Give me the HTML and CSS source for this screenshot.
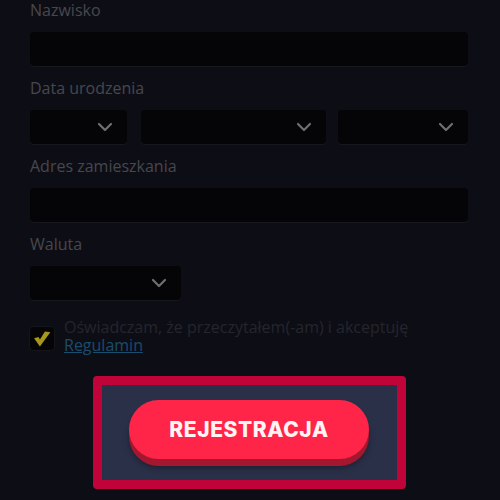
FILE: index.html
```html
<!DOCTYPE html>
<html lang="pl">
<head>
<meta charset="utf-8">
<link rel="stylesheet" href="styles.css">
</head>
<body>
<form class="form">
  <div class="field">
    <label class="label">Nazwisko</label>
    <div class="input"></div>
  </div>
  <div class="field">
    <label class="label">Data urodzenia</label>
    <div class="row">
      <div class="input select s-day"><svg class="chev" viewBox="0 0 16 10"><polyline points="2,2 8,8 14,2"/></svg></div>
      <div class="input select s-month"><svg class="chev" viewBox="0 0 16 10"><polyline points="2,2 8,8 14,2"/></svg></div>
      <div class="input select s-year"><svg class="chev" viewBox="0 0 16 10"><polyline points="2,2 8,8 14,2"/></svg></div>
    </div>
  </div>
  <div class="field">
    <label class="label">Adres zamieszkania</label>
    <div class="input"></div>
  </div>
  <div class="field">
    <label class="label">Waluta</label>
    <div class="input select s-cur"><svg class="chev" viewBox="0 0 16 10"><polyline points="2,2 8,8 14,2"/></svg></div>
  </div>
  <div class="terms">
    <div class="checkbox"><svg viewBox="0 0 24 24"><path d="M2.5 11 L9.5 21 L22 4 L15.5 3 L9.5 12.5 L7.8 9.5 Z"/></svg></div>
    <p class="terms-text"><span class="line">Oświadczam, że przeczytałem(-am) i akceptuję</span><a class="link">Regulamin</a></p>
  </div>
  <div class="spot">
    <div class="spot-inner">
      <button type="button" class="btn">REJESTRACJA</button>
    </div>
  </div>
</form>
</body>
</html>
```
FILE: styles.css
```css
html, body {
  margin: 0;
  padding: 0;
  background: #0d0e15;
  height: 100%;
  overflow: hidden;
}
.form {
  width: 438px;
  margin: 0 0 0 30px;
  font-family: "Open Sans", "Liberation Sans", sans-serif;
  display: flex;
  flex-direction: column;
}
.field {
  display: flex;
  flex-direction: column;
  margin-bottom: 12px;
}
.label {
  font-size: 16px;
  line-height: 20px;
  color: #47474e;
  margin-bottom: 12px;
}
.input {
  height: 34px;
  background: #050508;
  border-radius: 4px;
  box-shadow: 0 1px 0 #17181e;
  display: flex;
  align-items: center;
  justify-content: flex-end;
}
.row {
  display: flex;
}
.s-day { width: 97px; margin-right: 14px; }
.s-month { width: 185px; margin-right: 12px; }
.s-year { width: 130px; }
.s-cur { width: 151px; }
.select {
  padding-right: 14px;
  box-sizing: border-box;
}
.chev {
  width: 16px;
  height: 10px;
  fill: none;
  stroke: #6e6e75;
  stroke-width: 2.2;
  stroke-linecap: round;
  stroke-linejoin: round;
}
.terms {
  display: flex;
  align-items: flex-start;
  margin-top: 6px;
}
.checkbox {
  width: 24px;
  height: 23px;
  margin-top: 9px;
  margin-right: 10px;
  border-radius: 4px;
  background: #050508;
  box-shadow: 0 0 0 1px #15161c;
  display: flex;
  align-items: center;
  justify-content: center;
  flex: none;
}
.checkbox svg {
  width: 20px;
  height: 20px;
  fill: #a6971c;
}
.terms-text {
  margin: 0;
  font-size: 16px;
  line-height: 18px;
  color: #24252d;
  display: flex;
  flex-direction: column;
  align-items: flex-start;
}
.line, .link {
  display: block;
}
.link {
  color: #1a4c6b;
  text-decoration: underline;
}
.spot {
  align-self: center;
  margin-top: 22px;
  width: 313px;
  box-sizing: border-box;
  border: 9px solid #c0043a;
  border-radius: 4px;
  background: #c0043a;
}
.spot-inner {
  background: #2b3049;
  padding: 15px 0 13px;
  display: flex;
  justify-content: center;
}
.btn {
  width: 240px;
  height: 59px;
  margin-bottom: 8px;
  border: none;
  border-radius: 30px;
  background: #ff2549;
  box-shadow: 0 7px 0 #a3172f, 0 9px 6px rgba(0,0,0,0.35);
  color: #fff4f4;
  font-family: Inter, "Open Sans", sans-serif;
  font-weight: 800;
  font-size: 21px;
  letter-spacing: 0.6px;
  padding: 0;
  padding-bottom: 1px;
}
```
